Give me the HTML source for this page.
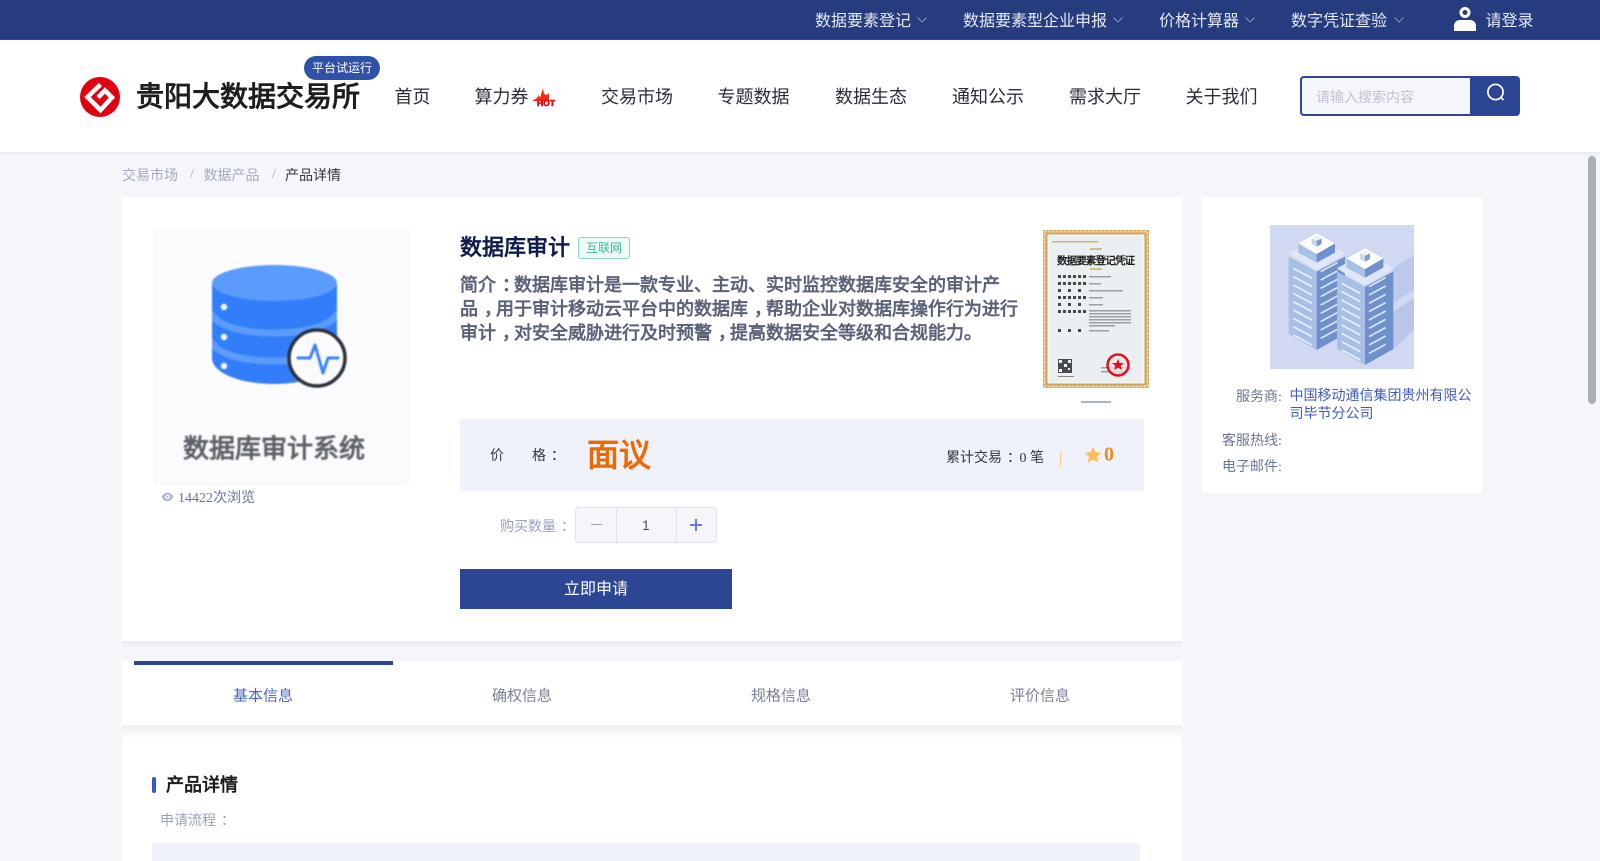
<!DOCTYPE html>
<html>
<head>
<meta charset="utf-8">
<title>数据库审计</title>
<style>
html,body{margin:0;padding:0;width:1600px;height:861px;overflow:hidden;background:#f5f6fa;font-family:"Liberation Serif",serif;}
.a{position:absolute;white-space:nowrap;}
.c{transform:translateY(-50%);}
.card{position:absolute;background:#fff;}
.p{position:relative;left:5px;}
svg{display:block;}
</style>
</head>
<body>
<!-- top bar -->
<div class="a" style="left:0;top:0;width:1600px;height:38.500px;background:#273c7f;border-bottom:1.500px solid #24557f;"></div>
<div class="a c" style="left:815px;top:18.5px;font-size:16px;color:#e6e9f3;">数据要素登记</div>
<svg class="a" style="left:916px;top:16px;" width="12" height="8"><path d="M1.500 1.500L6 6l4.500-4.500" fill="none" stroke="#8490b8" stroke-width="1"/></svg>
<div class="a c" style="left:963px;top:18.5px;font-size:16px;color:#e6e9f3;">数据要素型企业申报</div>
<svg class="a" style="left:1112px;top:16px;" width="12" height="8"><path d="M1.500 1.500L6 6l4.500-4.500" fill="none" stroke="#8490b8" stroke-width="1"/></svg>
<div class="a c" style="left:1159px;top:18.5px;font-size:16px;color:#e6e9f3;">价格计算器</div>
<svg class="a" style="left:1244px;top:16px;" width="12" height="8"><path d="M1.500 1.500L6 6l4.500-4.500" fill="none" stroke="#8490b8" stroke-width="1"/></svg>
<div class="a c" style="left:1291px;top:18.5px;font-size:16px;color:#e6e9f3;">数字凭证查验</div>
<svg class="a" style="left:1393px;top:16px;" width="12" height="8"><path d="M1.500 1.500L6 6l4.500-4.500" fill="none" stroke="#8490b8" stroke-width="1"/></svg>
<svg class="a" style="left:1454px;top:7px;" width="22" height="24" viewBox="0 0 22 24"><circle cx="11" cy="5.500" r="4" fill="none" stroke="#fff" stroke-width="3"/><path d="M0 24v-5c0-4 3-6 6-6h10c3 0 6 2 6 6v5z" fill="#fff"/></svg>
<div class="a c" style="left:1485.500px;top:18.5px;font-size:16px;color:#e6e9f3;">请登录</div>

<!-- header -->
<div class="a" style="left:0;top:40px;width:1600px;height:112px;background:#fff;box-shadow:0 1px 4px rgba(40,50,90,.1);"></div>
<svg class="a" style="left:80px;top:77px;" width="40" height="40" viewBox="0 0 40 40"><circle cx="20" cy="20" r="20" fill="#e00012"/><path d="M20.500 7.500L7.500 20l13 13L32 20.500 25 13.500 18 20.500" fill="none" stroke="#fff" stroke-width="4.600"/></svg>
<div class="a c" style="left:136px;top:95px;font-size:28px;font-weight:bold;color:#1e1e1e;">贵阳大数据交易所</div>
<div class="a" style="left:304px;top:56px;width:76px;height:24px;border-radius:12px;background:#2f51a7;color:#fff;font-size:12px;line-height:24px;text-align:center;">平台试运行</div>
<div class="a c" style="left:394.500px;top:96px;font-size:18px;color:#2a2d38;">首页</div>
<div class="a c" style="left:474.5px;top:96px;font-size:18px;color:#2a2d38;">算力券</div>
<svg class="a" style="left:531px;top:86px;" width="25" height="21" viewBox="0 0 25 21"><path d="M1 15l5-3 2-3 1 3 3-10 1 6 3 1 2-2 0 8z" fill="#f02a12"/><text x="6" y="20" font-family="Liberation Sans,sans-serif" font-size="8" font-weight="bold" fill="#e8000c" stroke="#e8000c" stroke-width=".6" textLength="18" lengthAdjust="spacingAndGlyphs">HOT</text></svg>
<div class="a c" style="left:601px;top:96px;font-size:18px;color:#2a2d38;">交易市场</div>
<div class="a c" style="left:717.5px;top:96px;font-size:18px;color:#2a2d38;">专题数据</div>
<div class="a c" style="left:835px;top:96px;font-size:18px;color:#2a2d38;">数据生态</div>
<div class="a c" style="left:952px;top:96px;font-size:18px;color:#2a2d38;">通知公示</div>
<div class="a c" style="left:1069px;top:96px;font-size:18px;color:#2a2d38;">需求大厅</div>
<div class="a c" style="left:1185.500px;top:96px;font-size:18px;color:#2a2d38;">关于我们</div>
<div class="a" style="left:1300px;top:76px;width:220px;height:40px;background:#2c4694;border-radius:4px;"></div>
<div class="a" style="left:1302px;top:78px;width:168px;height:36px;background:#f5f6fa;border-radius:2px 0 0 2px;"></div>
<div class="a c" style="left:1316px;top:96.5px;font-size:14px;color:#bfc3d0;">请输入搜索内容</div>
<svg class="a" style="left:1486px;top:83px;" width="20" height="20" viewBox="0 0 20 20"><circle cx="9.500" cy="9" r="7.600" fill="none" stroke="#fff" stroke-width="1.700"/><path d="M15 14.500l2.500 2.500" stroke="#fff" stroke-width="1.700" fill="none"/></svg>

<!-- scrollbar -->
<div class="a" style="left:1588px;top:156px;width:8px;height:248px;border-radius:4px;background:#a8adb6;"></div>

<!-- breadcrumb -->
<div class="a c" style="left:122px;top:174.5px;font-size:14px;color:#a4abc0;">交易市场</div>
<div class="a c" style="left:190px;top:174.5px;font-size:14px;color:#a4abc0;">/</div>
<div class="a c" style="left:203.5px;top:174.5px;font-size:14px;color:#a4abc0;">数据产品</div>
<div class="a c" style="left:272px;top:174.5px;font-size:14px;color:#a4abc0;">/</div>
<div class="a c" style="left:285px;top:174.5px;font-size:14px;color:#33363f;">产品详情</div>

<!-- main card -->
<div class="a" style="left:122px;top:641px;width:1060px;height:8px;background:linear-gradient(#e9ebef,#f5f6fa);"></div>
<div class="card" style="left:122px;top:197px;width:1060px;height:444px;"></div>

<div class="a" style="left:154px;top:229px;width:254px;height:254px;background:#fbfbfd;border:1px solid #f6f7fb;border-radius:4px;"></div>
<svg class="a" style="left:154px;top:229px;filter:blur(.8px);" width="256" height="256" viewBox="0 0 256 256">
<clipPath id="cy"><path d="M58 54v75c0 15 28 26 62 26s63-11 63-26V54z"/></clipPath>
<path d="M58 54v75c0 15 28 26 62 26s63-11 63-26V54z" fill="#327efa"/>
<ellipse cx="120.500" cy="54" rx="62.500" ry="18" fill="#5a9bfb"/>
<g clip-path="url(#cy)">
<path d="M56 83c6 14 32 21 64 21s58-7 65-21" fill="none" stroke="#5a9bfb" stroke-width="7"/>
<path d="M56 111c6 14 32 21 64 21s58-7 65-21" fill="none" stroke="#5a9bfb" stroke-width="7"/>
</g>
<circle cx="70" cy="78" r="3.200" fill="#f2f6ff"/><circle cx="70" cy="108" r="3.200" fill="#f2f6ff"/><circle cx="70" cy="137" r="3.200" fill="#f2f6ff"/>
<circle cx="163" cy="129" r="28" fill="#fbfbfd" stroke="#2b3038" stroke-width="3.500"/>
<path d="M144 129h12l5-13 8 28 5-15h10" fill="none" stroke="#3a82f7" stroke-width="3" stroke-linejoin="round" stroke-linecap="round"/>
</svg>
<div class="a c" style="left:183px;top:446.500px;font-size:26px;font-weight:bold;color:#5b5f66;filter:blur(.9px);">数据库审计系统</div>
<svg class="a" style="left:161px;top:492px;" width="13" height="10" viewBox="0 0 13 10"><path d="M.5 5C2 2 4 .8 6.500.8S11 2 12.500 5C11 8 9 9.200 6.500 9.200S2 8 .5 5z" fill="#b4bbd0"/><circle cx="6.500" cy="5" r="2.200" fill="#fff"/><circle cx="6.500" cy="5" r="1.100" fill="#b4bbd0"/></svg>
<div class="a c" style="left:178px;top:496.500px;font-size:14px;color:#6b7492;">14422次浏览</div>

<div class="a c" style="left:460px;top:246px;font-size:22px;font-weight:bold;color:#101b4c;">数据库审计</div>
<div class="a" style="left:578px;top:237px;width:50px;height:20px;border:1px solid #8fd6c0;background:#eefaf6;border-radius:3px;color:#45b895;font-size:12px;line-height:20px;text-align:center;">互联网</div>
<div class="a" style="left:460px;top:273px;font-size:18px;line-height:24px;font-weight:bold;color:#5a6178;">简介<span class="p" style="left:6px">：</span>数据库审计是一款专业、主动、实时监控数据库安全的审计产<br>品<span class="p" style="left:6px">，</span>用于审计移动云平台中的数据库<span class="p" style="left:6px">，</span>帮助企业对数据库操作行为进行<br>审计<span class="p" style="left:6px">，</span>对安全威胁进行及时预警<span class="p" style="left:6px">，</span>提高数据安全等级和合规能力。</div>

<!-- certificate -->
<svg class="a" style="left:1043px;top:230px;" width="106" height="158" viewBox="0 0 106 158">
<rect width="106" height="158" fill="#dcb06a"/>
<rect x="1.500" y="1.500" width="103" height="155" fill="none" stroke="#f3e3c4" stroke-width="1.500" stroke-dasharray="2 2"/>
<rect x="4" y="4" width="98" height="150" fill="#fff" stroke="#c99a4f" stroke-width="1"/>
<rect x="5.500" y="5.500" width="95" height="147" fill="#eaf0f2"/>
<g fill="#c8a050"><rect x="9" y="11" width="46" height="1.500" opacity=".8"/></g>
<rect x="47" y="18" width="12" height="2" fill="#d8bb80"/>
<text x="53" y="34" text-anchor="middle" font-size="10.500" font-weight="bold" fill="#1e1e1e" textLength="78" font-family="Liberation Sans,'WenQuanYi Zen Hei',sans-serif">数据要素登记凭证</text>
<rect x="47" y="38" width="12" height="2" fill="#d8bb80"/>
<g fill="#2a2a2a" opacity=".85"><rect x="15" y="45" width="3" height="3"/><rect x="20" y="45" width="3" height="3"/><rect x="25" y="45" width="3" height="3"/><rect x="30" y="45" width="3" height="3"/><rect x="35" y="45" width="3" height="3"/><rect x="40" y="45" width="3" height="3"/>
<rect x="15" y="52" width="3" height="3"/><rect x="20" y="52" width="3" height="3"/><rect x="25" y="52" width="3" height="3"/><rect x="30" y="52" width="3" height="3"/><rect x="35" y="52" width="3" height="3"/><rect x="40" y="52" width="3" height="3"/>
<rect x="15" y="59" width="3" height="3"/><rect x="25" y="59" width="3" height="3"/><rect x="35" y="59" width="3" height="3"/>
<rect x="15" y="66" width="3" height="3"/><rect x="20" y="66" width="3" height="3"/><rect x="25" y="66" width="3" height="3"/><rect x="30" y="66" width="3" height="3"/><rect x="35" y="66" width="3" height="3"/><rect x="40" y="66" width="3" height="3"/>
<rect x="15" y="73" width="3" height="3"/><rect x="25" y="73" width="3" height="3"/><rect x="35" y="73" width="3" height="3"/>
<rect x="15" y="80" width="3" height="3"/><rect x="20" y="80" width="3" height="3"/><rect x="25" y="80" width="3" height="3"/><rect x="30" y="80" width="3" height="3"/><rect x="35" y="80" width="3" height="3"/><rect x="40" y="80" width="3" height="3"/>
<rect x="15" y="99" width="3" height="3"/><rect x="25" y="99" width="3" height="3"/><rect x="35" y="99" width="3" height="3"/></g>
<g fill="#9a9ea5"><rect x="46" y="46" width="22" height="1.500"/><rect x="46" y="53" width="12" height="1.500"/><rect x="46" y="60" width="34" height="1.500"/><rect x="46" y="67" width="14" height="1.500"/><rect x="46" y="74" width="14" height="1.500"/><rect x="46" y="80" width="42" height="1.500"/><rect x="46" y="83" width="42" height="1.500"/><rect x="46" y="86" width="42" height="1.500"/><rect x="46" y="89" width="42" height="1.500"/><rect x="46" y="92" width="42" height="1.500"/><rect x="46" y="95" width="26" height="1.500"/><rect x="46" y="100" width="20" height="1.500"/></g>
<rect x="15" y="129" width="14" height="14" fill="#4a4a4a"/>
<rect x="16" y="130" width="3" height="3" fill="#eef3f5"/><rect x="25" y="130" width="3" height="3" fill="#eef3f5"/><rect x="16" y="139" width="3" height="3" fill="#eef3f5"/><rect x="21" y="134" width="3" height="3" fill="#eef3f5"/><rect x="25" y="138" width="2" height="2" fill="#eef3f5"/>
<rect x="15" y="146" width="16" height="1" fill="#888"/>
<rect x="58" y="137" width="26" height="1.500" fill="#9a9ea5"/>
<rect x="58" y="141" width="26" height="1.500" fill="#9a9ea5"/>
<circle cx="75" cy="135" r="10.500" fill="#f8e0e0" fill-opacity=".7" stroke="#e01020" stroke-width="2.500"/>
<path d="M75 129l1.700 4h4.300l-3.300 2.700 1.200 4.300-3.900-2.400-3.900 2.400 1.200-4.300-3.300-2.700h4.300z" fill="#e01020"/>
</svg>
<div class="a" style="left:1081px;top:401px;width:30px;height:2px;background:#a8b3cf;"></div>

<!-- price band -->
<div class="a" style="left:460px;top:419px;width:684px;height:72px;background:#eff2fa;"></div>
<div class="a c" style="left:490px;top:455px;font-size:14px;color:#33363f;">价</div>
<div class="a c" style="left:532px;top:455px;font-size:14px;color:#33363f;">格<span class="p">：</span></div>
<div class="a c" style="left:587px;top:453px;font-size:32px;color:#ee6a00;font-weight:bold;">面议</div>
<div class="a c" style="left:946px;top:457px;font-size:14px;color:#33363f;">累计交易<span class="p">：</span> 0 笔</div>
<div class="a" style="left:1060px;top:452px;width:1px;height:15px;background:#f5c98f;"></div>
<svg class="a" style="left:1085px;top:447px;" width="16" height="16" viewBox="0 0 16 16"><path d="M8 .8l2.200 4.700 5 .6-3.700 3.500 1 5L8 12.100 3.500 14.600l1-5L.8 6.100l5-.6z" fill="#fbbf5c" stroke="#fbbf5c" stroke-linejoin="round"/></svg>
<div class="a c" style="left:1104px;top:455px;font-size:20px;font-weight:bold;color:#ee8a1f;">0</div>

<!-- quantity -->
<div class="a c" style="left:500px;top:526px;font-size:14px;color:#9aa2b8;">购买数量<span class="p">：</span></div>
<div class="a" style="left:575px;top:507px;width:140px;height:34px;background:#f5f6fa;border:1px solid #dfe3ee;border-radius:4px;"></div>
<div class="a" style="left:616px;top:508px;width:59px;height:34px;border-left:1px solid #dfe3ee;border-right:1px solid #dfe3ee;"></div>
<div class="a" style="left:591px;top:524px;width:11px;height:1px;background:#9aa2b8;"></div>
<div class="a c" style="left:642px;top:525px;font-size:14px;color:#4b5068;font-family:'Liberation Sans',sans-serif;">1</div>
<div class="a" style="left:690px;top:524px;width:12px;height:1.500px;background:#6a7ce4;"></div>
<div class="a" style="left:695.300px;top:518.500px;width:1.500px;height:12px;background:#6a7ce4;"></div>

<div class="a" style="left:460px;top:570px;width:272px;height:39px;background:#2c4694;color:#fff;font-size:16px;line-height:39px;text-align:center;box-shadow:0 -1px 0 #2c4694;">立即申请</div>

<!-- tabs + lower card -->
<div class="card" style="left:122px;top:661px;width:1060px;height:200px;"></div>
<div class="a" style="left:122px;top:725px;width:1060px;height:14px;background:linear-gradient(#eeeeee,#fff);"></div>
<div class="a" style="left:134px;top:661px;width:259px;height:4px;background:#2c4694;"></div>
<div class="a c" style="left:233px;top:695px;font-size:15px;color:#4764c2;">基本信息</div>
<div class="a c" style="left:492px;top:695px;font-size:15px;color:#7a8096;">确权信息</div>
<div class="a c" style="left:751px;top:695px;font-size:15px;color:#7a8096;">规格信息</div>
<div class="a c" style="left:1010px;top:695px;font-size:15px;color:#7a8096;">评价信息</div>

<div class="a" style="left:152px;top:777px;width:4px;height:16px;border-radius:2px;background:#3558c0;"></div>
<div class="a c" style="left:166px;top:784px;font-size:18px;font-weight:bold;color:#1e1e1e;">产品详情</div>
<div class="a c" style="left:160px;top:820px;font-size:14px;color:#9aa2b8;">申请流程<span class="p">：</span></div>
<div class="a" style="left:152px;top:843px;width:988px;height:18px;background:#eff2fa;"></div>

<!-- right card -->
<div class="card" style="left:1202px;top:197px;width:280px;height:296px;"></div>
<svg class="a" style="left:1270px;top:225px;" width="144" height="144" viewBox="210 45 432 432">
<rect x="210" y="45" width="432" height="432" fill="#d0d8f2"/>
<polygon points="578,175 642,135 642,240 578,280" fill="#bcc9ec"/>
<polygon points="578,305 642,265 642,360 578,420" fill="#b9c6ea"/>
<g id="b">
<polygon points="266,140 350,185 350,420 266,372" fill="#a9c0e6"/>
<polygon points="350,185 435,140 435,372 350,420" fill="#7090cc"/>
<polygon points="265,130 350,85 437,130 350,182" fill="#dfe7f7"/>
<polygon points="295,100 350,132 350,158 295,128" fill="#a9c0e6"/>
<polygon points="350,132 405,100 405,128 350,158" fill="#7090cc"/>
<polygon points="295,100 350,70 405,100 350,132" fill="#fff"/>
<polygon points="335,85 350,92 350,110 335,102" fill="#c9d7ee"/>
<polygon points="350,92 365,85 365,102 350,110" fill="#7f9bd1"/>
<polygon points="335,85 350,78 365,85 350,92" fill="#eef3fb"/>
<path d="M280 175l56 30M280 200l56 30M280 225l56 30M280 250l56 30M280 275l56 30M280 300l56 30M280 325l56 30M280 350l56 30M280 375l56 30" stroke="#e8eef9" stroke-width="5"/>
<path d="M362 185l50-27M362 210l50-27M362 235l50-27M362 260l50-27M362 285l50-27M362 310l50-27M362 335l50-27M362 360l50-27M362 385l50-27" stroke="#dbe4f5" stroke-width="5"/>
</g>
<use href="#b" x="145" y="45"/>
</svg>
<div class="a c" style="left:1236px;top:396px;font-size:14px;color:#6b7492;">服务商:</div>
<div class="a" style="left:1289.500px;top:388px;width:182px;font-size:14px;line-height:18px;color:#3f5bb8;white-space:normal;">中国移动通信集团贵州有限公司毕节分公司</div>
<div class="a c" style="left:1222px;top:440px;font-size:14px;color:#6b7492;">客服热线:</div>
<div class="a c" style="left:1222px;top:466px;font-size:14px;color:#6b7492;">电子邮件:</div>
</body>
</html>
